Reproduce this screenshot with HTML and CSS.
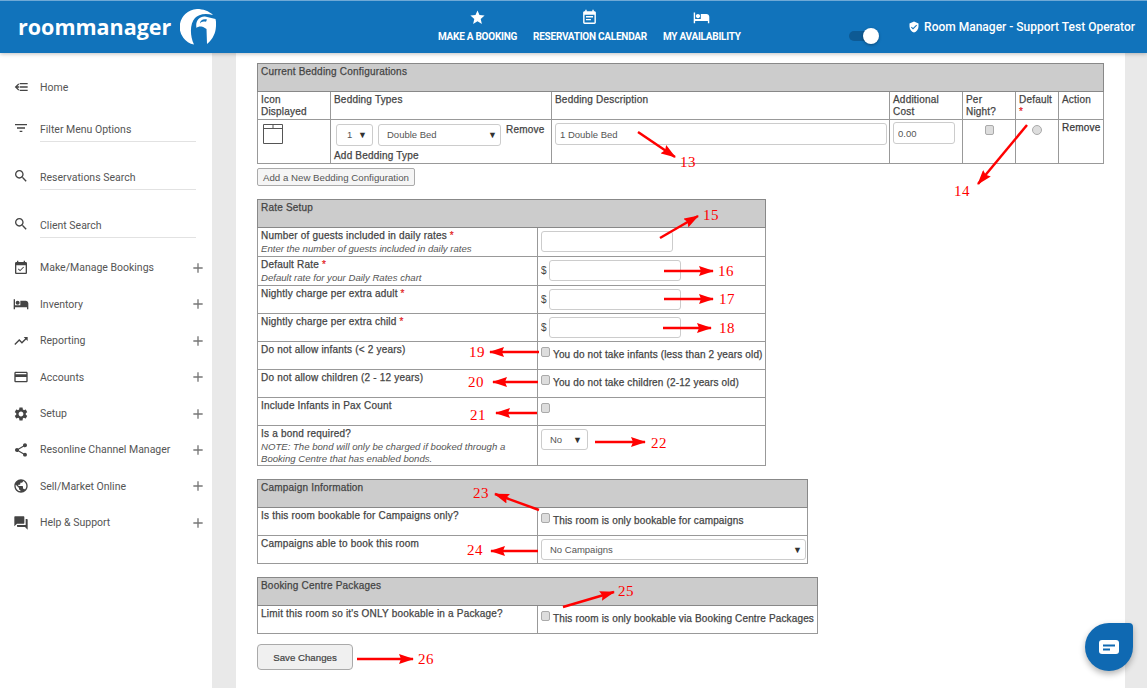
FILE: index.html
```html
<!DOCTYPE html>
<html lang="en">
<head>
<meta charset="utf-8">
<title>Room Manager</title>
<link rel="stylesheet" href="styles.css">
</head>
<body>
<svg class="defs" width="0" height="0" aria-hidden="true">
  <symbol id="i-star" viewBox="0 0 24 24"><path d="M12 17.27L18.18 21l-1.64-7.03L22 9.24l-7.19-.61L12 2 9.19 8.63 2 9.24l5.46 4.73L5.82 21z"/></symbol>
  <symbol id="i-note" viewBox="0 0 24 24"><path d="M17 10H7v2h10v-2zm2-7h-1V1h-2v2H8V1H6v2H5c-1.11 0-1.99.9-1.99 2L3 19c0 1.1.89 2 2 2h14c1.1 0 2-.9 2-2V5c0-1.1-.9-2-2-2zm0 16H5V8h14v11zm-5-5H7v2h7v-2z"/></symbol>
  <symbol id="i-hotel" viewBox="0 0 24 24"><path d="M7 13c1.66 0 3-1.34 3-3S8.66 7 7 7s-3 1.34-3 3 1.34 3 3 3zm12-6h-8v7H3V5H1v15h2v-3h18v3h2v-9c0-2.21-1.79-4-4-4z"/></symbol>
  <symbol id="i-shield" viewBox="0 0 24 24"><path d="M12 1L3 5v6c0 5.55 3.84 10.74 9 12 5.16-1.26 9-6.45 9-12V5l-9-4zm-2 16l-4-4 1.41-1.41L10 14.17l6.59-6.59L18 9l-8 8z"/></symbol>
  <symbol id="i-menu" viewBox="0 0 24 24"><path d="M10 6h12v2H10zM10 11h12v2H10zM10 16h12v2H10zM8 6.600L2.600 12 8 17.400l1.400-1.400-2.900-3H9v-2H6.500l2.900-3z"/></symbol>
  <symbol id="i-filter" viewBox="0 0 24 24"><path d="M10 18h4v-2h-4v2zM3 6v2h18V6H3zm3 7h12v-2H6v2z"/></symbol>
  <symbol id="i-search" viewBox="0 0 24 24"><path d="M15.5 14h-.79l-.28-.27C15.41 12.59 16 11.11 16 9.5 16 5.91 13.09 3 9.5 3S3 5.91 3 9.5 5.91 16 9.5 16c1.61 0 3.09-.59 4.23-1.57l.27.28v.79l5 4.99L20.49 19l-4.99-5zm-6 0C7.01 14 5 11.99 5 9.5S7.01 5 9.5 5 14 7.01 14 9.5 11.99 14 9.5 14z"/></symbol>
  <symbol id="i-event" viewBox="0 0 24 24"><path d="M16.53 11.06L15.47 10l-4.88 4.88-2.12-2.12-1.06 1.06L10.59 17l5.94-5.94zM19 3h-1V1h-2v2H8V1H6v2H5c-1.11 0-1.99.9-1.99 2L3 19c0 1.1.89 2 2 2h14c1.1 0 2-.9 2-2V5c0-1.1-.9-2-2-2zm0 16H5V8h14v11z"/></symbol>
  <symbol id="i-trend" viewBox="0 0 24 24"><path d="M16 6l2.29 2.29-4.88 4.88-4-4L2 16.59 3.41 18l6-6 4 4 6.3-6.29L22 12V6z"/></symbol>
  <symbol id="i-card" viewBox="0 0 24 24"><path d="M20 4H4c-1.11 0-1.99.89-1.99 2L2 18c0 1.11.89 2 2 2h16c1.11 0 2-.89 2-2V6c0-1.11-.89-2-2-2zm0 14H4v-6h16v6zm0-10H4V6h16v2z"/></symbol>
  <symbol id="i-gear" viewBox="0 0 24 24"><path d="M19.14,12.94c0.04-0.3,0.06-0.61,0.06-0.94c0-0.32-0.02-0.64-0.07-0.94l2.03-1.58c0.18-0.14,0.23-0.41,0.12-0.61l-1.92-3.32c-0.12-0.22-0.37-0.29-0.59-0.22l-2.39,0.96c-0.5-0.38-1.03-0.7-1.62-0.94L14.4,2.81c-0.04-0.24-0.24-0.41-0.48-0.41h-3.84c-0.24,0-0.43,0.17-0.47,0.41L9.25,5.35C8.66,5.59,8.12,5.92,7.63,6.29L5.24,5.33c-0.22-0.08-0.47,0-0.59,0.22L2.74,8.87C2.62,9.08,2.66,9.34,2.86,9.48l2.03,1.58C4.84,11.36,4.8,11.69,4.8,12s0.02,0.64,0.07,0.94l-2.03,1.58c-0.18,0.14-0.23,0.41-0.12,0.61l1.92,3.32c0.12,0.22,0.37,0.29,0.59,0.22l2.39-0.96c0.5,0.38,1.03,0.7,1.62,0.94l0.36,2.54c0.05,0.24,0.24,0.41,0.48,0.41h3.84c0.24,0,0.44-0.17,0.47-0.41l0.36-2.54c0.59-0.24,1.13-0.56,1.62-0.94l2.39,0.96c0.22,0.08,0.47,0,0.59-0.22l1.92-3.32c0.12-0.22,0.07-0.47-0.12-0.61L19.14,12.94z M12,15.6c-1.98,0-3.6-1.62-3.6-3.6s1.62-3.6,3.6-3.6s3.6,1.62,3.6,3.6S13.98,15.6,12,15.6z"/></symbol>
  <symbol id="i-share" viewBox="0 0 24 24"><path d="M18 16.08c-.76 0-1.44.3-1.96.77L8.91 12.7c.05-.23.09-.46.09-.7s-.04-.47-.09-.7l7.05-4.11c.54.5 1.25.81 2.04.81 1.66 0 3-1.34 3-3s-1.34-3-3-3-3 1.34-3 3c0 .24.04.47.09.7L8.04 9.81C7.5 9.31 6.79 9 6 9c-1.66 0-3 1.34-3 3s1.34 3 3 3c.79 0 1.5-.31 2.04-.81l7.12 4.16c-.05.21-.08.43-.08.65 0 1.61 1.31 2.92 2.92 2.92 1.61 0 2.92-1.31 2.92-2.92s-1.31-2.92-2.92-2.92z"/></symbol>
  <symbol id="i-globe" viewBox="0 0 24 24"><path d="M12 2C6.48 2 2 6.48 2 12s4.48 10 10 10 10-4.48 10-10S17.52 2 12 2zm-1 17.93c-3.95-.49-7-3.85-7-7.93 0-.62.08-1.21.21-1.79L9 15v1c0 1.1.9 2 2 2v1.93zm6.9-2.54c-.26-.81-1-1.39-1.9-1.39h-1v-3c0-.55-.45-1-1-1H8v-2h2c.55 0 1-.45 1-1V7h2c1.1 0 2-.9 2-2v-.41c2.93 1.19 5 4.06 5 7.41 0 2.08-.8 3.97-2.1 5.39z"/></symbol>
  <symbol id="i-forum" viewBox="0 0 24 24"><path d="M21 6h-2v9H6v2c0 .55.45 1 1 1h11l4 4V7c0-.55-.45-1-1-1zm-4 6V3c0-.55-.45-1-1-1H3c-.55 0-1 .45-1 1v14l4-4h10c.55 0 1-.45 1-1z"/></symbol>
  <symbol id="i-plus" viewBox="0 0 24 24"><path d="M19 13h-6v6h-2v-6H5v-2h6V5h2v6h6v2z"/></symbol>
</svg>

<header class="topbar">
  <div class="brand">
    <span class="brand-name">roommanager</span>
    <svg class="brand-mark" viewBox="0 0 36 36" width="36" height="36" aria-hidden="true">
      <path class="w" d="M17 0A18 18 0 0 0 14 35.6C9.5 26 10 14 15 9C18 6 24 3.500 33 6C29 2 23 0 17 0Z"/>
      <path class="w" d="M16.500 19C15 12 19.500 7 25 7.500L35.500 10C36.300 13 36.200 16 35.700 20C35 26 31 32 27 35L26.500 20L24 18.500C22 17 18 17 16.500 19Z"/>
      <path class="b" d="M27 10.500C23 9.500 20 11.500 20 14.500C21 12.500 23.500 12 26 12.800Z"/>
    </svg>
  </div>
  <nav class="topnav">
    <a class="topnav-item"><svg class="topnav-icon"><use href="#i-star"/></svg><span>MAKE A BOOKING</span></a>
    <a class="topnav-item"><svg class="topnav-icon"><use href="#i-note"/></svg><span>RESERVATION CALENDAR</span></a>
    <a class="topnav-item"><svg class="topnav-icon"><use href="#i-hotel"/></svg><span>MY AVAILABILITY</span></a>
  </nav>
  <div class="toggle"><span class="toggle-knob"></span></div>
  <div class="user"><svg class="user-icon"><use href="#i-shield"/></svg><span>Room Manager - Support Test Operator</span></div>
</header>

<div class="shell">
  <aside class="sidebar">
    <a class="side-item first"><svg class="side-icon"><use href="#i-menu"/></svg><span>Home</span></a>
    <a class="side-field"><svg class="side-icon"><use href="#i-filter"/></svg><span class="field-label">Filter Menu Options</span></a>
    <a class="side-field tall"><svg class="side-icon"><use href="#i-search"/></svg><span class="field-label">Reservations Search</span></a>
    <a class="side-field tall"><svg class="side-icon"><use href="#i-search"/></svg><span class="field-label">Client Search</span></a>
    <div class="side-group">
      <a class="side-item"><svg class="side-icon"><use href="#i-event"/></svg><span>Make/Manage Bookings</span><svg class="side-plus"><use href="#i-plus"/></svg></a>
      <a class="side-item"><svg class="side-icon"><use href="#i-hotel"/></svg><span>Inventory</span><svg class="side-plus"><use href="#i-plus"/></svg></a>
      <a class="side-item"><svg class="side-icon"><use href="#i-trend"/></svg><span>Reporting</span><svg class="side-plus"><use href="#i-plus"/></svg></a>
      <a class="side-item"><svg class="side-icon"><use href="#i-card"/></svg><span>Accounts</span><svg class="side-plus"><use href="#i-plus"/></svg></a>
      <a class="side-item"><svg class="side-icon"><use href="#i-gear"/></svg><span>Setup</span><svg class="side-plus"><use href="#i-plus"/></svg></a>
      <a class="side-item"><svg class="side-icon"><use href="#i-share"/></svg><span>Resonline Channel Manager</span><svg class="side-plus"><use href="#i-plus"/></svg></a>
      <a class="side-item"><svg class="side-icon"><use href="#i-globe"/></svg><span>Sell/Market Online</span><svg class="side-plus"><use href="#i-plus"/></svg></a>
      <a class="side-item"><svg class="side-icon"><use href="#i-forum"/></svg><span>Help &amp; Support</span><svg class="side-plus"><use href="#i-plus"/></svg></a>
    </div>
  </aside>

  <main class="content">
    <table class="grid grid-bedding">
      <colgroup><col class="c73"><col class="c221"><col class="c338"><col class="c73"><col class="c53"><col class="c43"><col class="c45"></colgroup>
      <tr class="r28"><th colspan="7">Current Bedding Configurations</th></tr>
      <tr class="r28">
        <td>Icon<br>Displayed</td><td>Bedding Types</td><td>Bedding Description</td><td>Additional<br>Cost</td><td>Per<br>Night?</td><td>Default<br><span class="req">*</span></td><td>Action</td>
      </tr>
      <tr class="r44">
        <td><svg class="bed" viewBox="0 0 20 20" width="20" height="20" aria-hidden="true"><path d="M.5.5h19v19H.5zM.5 4.500h19M10 .5v4"/></svg></td>
        <td class="pick-cell">
          <div class="pick-row">
            <div class="select s-count"><span>1</span><i>▼</i></div>
            <div class="select s-bed"><span>Double Bed</span><i>▼</i></div>
            <b class="remove">Remove</b>
          </div>
          <div class="add-type">Add Bedding Type</div>
        </td>
        <td class="desc-cell"><input class="input i-desc" type="text" value="1 Double Bed"></td>
        <td class="cost-cell"><input class="input i-cost" type="text" value="0.00"></td>
        <td class="center"><input class="check" type="checkbox"></td>
        <td class="center"><input class="radio" type="radio"></td>
        <td class="action">Remove</td>
      </tr>
    </table>
    <button class="btn-add" type="button">Add a New Bedding Configuration</button>

    <table class="grid grid-rate">
      <colgroup><col class="c280"><col></colgroup>
      <tr class="r28"><th colspan="2">Rate Setup</th></tr>
      <tr class="r29"><td><b>Number of guests included in daily rates <span class="req">*</span></b><em>Enter the number of guests included in daily rates</em></td><td class="field"><input class="input i-rate" type="text"></td></tr>
      <tr class="r29"><td><b>Default Rate <span class="req">*</span></b><em>Default rate for your Daily Rates chart</em></td><td class="field"><span class="dollar">$</span><input class="input i-rate" type="text"></td></tr>
      <tr class="r28"><td><b>Nightly charge per extra adult <span class="req">*</span></b></td><td class="field"><span class="dollar">$</span><input class="input i-rate" type="text"></td></tr>
      <tr class="r28"><td><b>Nightly charge per extra child <span class="req">*</span></b></td><td class="field"><span class="dollar">$</span><input class="input i-rate" type="text"></td></tr>
      <tr class="r28"><td><b>Do not allow infants (&lt; 2 years)</b></td><td class="tick"><input class="check" type="checkbox"><b>You do not take infants (less than 2 years old)</b></td></tr>
      <tr class="r28"><td><b>Do not allow children (2 - 12 years)</b></td><td class="tick"><input class="check" type="checkbox"><b>You do not take children (2-12 years old)</b></td></tr>
      <tr class="r28"><td><b>Include Infants in Pax Count</b></td><td class="tick"><input class="check" type="checkbox"></td></tr>
      <tr class="r40"><td><b>Is a bond required?</b><em>NOTE: The bond will only be charged if booked through a Booking Centre that has enabled bonds.</em></td><td class="field"><div class="select s-no"><span>No</span><i>▼</i></div></td></tr>
    </table>

    <table class="grid grid-campaign">
      <colgroup><col class="c280"><col></colgroup>
      <tr class="r28"><th colspan="2">Campaign Information</th></tr>
      <tr class="r28"><td><b>Is this room bookable for Campaigns only?</b></td><td class="tick"><input class="check" type="checkbox"><b>This room is only bookable for campaigns</b></td></tr>
      <tr class="r28"><td><b>Campaigns able to book this room</b></td><td class="field"><div class="select s-camp"><span>No Campaigns</span><i>▼</i></div></td></tr>
    </table>

    <table class="grid grid-package">
      <colgroup><col class="c280"><col></colgroup>
      <tr class="r28"><th colspan="2">Booking Centre Packages</th></tr>
      <tr class="r28"><td><b>Limit this room so it's ONLY bookable in a Package?</b></td><td class="tick"><input class="check" type="checkbox"><b>This room is only bookable via Booking Centre Packages</b></td></tr>
    </table>

    <button class="btn-save" type="button">Save Changes</button>
  </main>
</div>

<div class="chat"><svg viewBox="0 0 20 14" width="20" height="14" aria-hidden="true"><path class="chat-w" d="M3 0h14a3 3 0 0 1 3 3v8a3 3 0 0 1-3 3H3a3 3 0 0 1-3-3V3a3 3 0 0 1 3-3z"/><path class="chat-b" d="M4 4.500h12v2H4zM4 8.500h7v2H4z"/></svg></div>

<svg class="notes" viewBox="0 0 1147 688" width="1147" height="688" aria-hidden="true">
  <defs><marker id="head" markerUnits="userSpaceOnUse" markerWidth="15" markerHeight="10" refX="14" refY="5" orient="auto"><path d="M0 0L15 5L0 10L2 5z" fill="#f00"/></marker></defs>
  <g class="arrows">
    <line x1="638" y1="132" x2="675" y2="157"/>
    <line x1="1027" y1="125" x2="978" y2="184"/>
    <line x1="660" y1="238" x2="698" y2="216"/>
    <line x1="664" y1="271" x2="713" y2="271"/>
    <line x1="664" y1="299" x2="713" y2="299"/>
    <line x1="663" y1="328" x2="711" y2="328"/>
    <line x1="539" y1="352" x2="490" y2="352"/>
    <line x1="538" y1="382" x2="493" y2="382"/>
    <line x1="537" y1="413" x2="496" y2="413"/>
    <line x1="595" y1="442" x2="645" y2="442"/>
    <line x1="539" y1="510" x2="495" y2="494"/>
    <line x1="538" y1="551" x2="491" y2="551"/>
    <line x1="563" y1="607" x2="614" y2="592"/>
    <line x1="357" y1="659" x2="413" y2="659"/>
  </g>
  <g class="digits">
    <text x="680" y="167">13</text><text x="954" y="196">14</text><text x="703" y="220">15</text>
    <text x="718" y="276">16</text><text x="719" y="304">17</text><text x="719" y="333">18</text>
    <text x="469" y="357">19</text><text x="468" y="387">20</text><text x="470" y="420">21</text>
    <text x="651" y="448">22</text><text x="473" y="498">23</text><text x="467" y="555">24</text>
    <text x="618" y="596">25</text><text x="418" y="664">26</text>
  </g>
</svg>
</body>
</html>
```
FILE: styles.css
```css
* { box-sizing: border-box; }
html, body { margin: 0; height: 688px; overflow: hidden; }
body { background: #e9e9e9; font-family: "Liberation Sans", Arial, sans-serif; font-size: 10px; color: #444; position: relative; }
.defs { position: absolute; }

.topbar { height: 53px; background: #1173bb; border-top: 1px solid #6fa9d6; display: flex; align-items: flex-start; color: #fff; position: relative; z-index: 2; box-shadow: 0 1px 4px rgba(0,0,0,.25); }
.brand { width: 438px; padding: 8px 0 0 18px; display: flex; align-items: flex-start; gap: 8px; flex: none; }
.brand-name { font-family: "Open Sans", sans-serif; font-weight: 700; font-size: 21.500px; line-height: 36px; width: 154px; white-space: nowrap; }
.brand-mark { flex: none; }
.brand-mark .w { fill: #fff; }
.brand-mark .b { fill: #1173bb; }
.topnav { display: flex; gap: 16px; flex: none; }
.topnav-item { display: flex; flex-direction: column; align-items: center; font-family: Roboto, sans-serif; font-weight: 700; font-size: 10px; padding-top: 8px; line-height: 12px; letter-spacing: -.25px; white-space: nowrap; }
.topnav-icon { width: 17px; height: 17px; fill: #fff; margin-bottom: 5px; }
.toggle { margin: 30px 0 0 108px; width: 26px; height: 10px; background: #0d5a94; border-radius: 5px; position: relative; flex: none; }
.toggle-knob { position: absolute; left: 14px; top: -3.500px; width: 16px; height: 16px; border-radius: 50%; background: #fff; box-shadow: 0 1px 3px rgba(0,0,0,.35); }
.user { margin-left: auto; padding: 16px 12px 0 0; display: flex; align-items: center; gap: 4px; font-family: Roboto, sans-serif; font-weight: 500; font-size: 12px; line-height: 20px; white-space: nowrap; }
.user-icon { width: 12px; height: 12px; fill: #fff; }

.shell { display: flex; height: 635px; }
.sidebar { width: 212px; background: #fff; flex: none; padding-top: 16px; font-family: Roboto, sans-serif; font-size: 10.500px; color: #555; }
.side-item { display: flex; align-items: center; height: 36.400px; padding: 0 6px 0 13px; white-space: nowrap; }
.side-icon { width: 16px; height: 16px; fill: #444; flex: none; margin-right: 11px; }
.side-plus { width: 16px; height: 16px; fill: #777; margin-left: auto; }
.side-field { display: flex; align-items: flex-end; height: 37px; padding: 0 16px 0 13px; white-space: nowrap; }
.side-field .side-icon { margin-bottom: 6px; }
.side-field.tall { height: 48px; }
.field-label { flex: 1; border-bottom: 1px solid #e2e2e2; padding-bottom: 4px; line-height: 14px; }
.side-group { margin-top: 11.400px; }

.content { width: 889px; margin-left: 24px; background: #fff; padding: 10px 0 0 21px; flex: none; }
.grid { border-collapse: collapse; table-layout: fixed; }
.grid th, .grid td { border: 1px solid #999; padding: 2px 3px 0; vertical-align: top; text-align: left; line-height: 12px; font-size: 10px; font-weight: 400; color: #444; letter-spacing: .2px; -webkit-text-stroke: .25px #444; }
.grid th { background: #ccc; border-color: #888; }
.grid b { font-weight: 400; }
.grid em { display: block; margin-top: 1px; font-style: italic; font-size: 9.600px; letter-spacing: 0; -webkit-text-stroke: 0; color: #555; }
.r28 { height: 28px; } .r29 { height: 29px; } .r40 { height: 40px; } .r44 { height: 44px; }
.c73 { width: 73px; } .c221 { width: 221px; } .c338 { width: 338px; } .c53 { width: 53px; } .c43 { width: 43px; } .c45 { width: 45px; } .c280 { width: 280px; }
.grid-bedding { width: 846px; }
.grid-rate { width: 509px; margin-top: 13px; }
.grid-campaign { width: 551px; margin-top: 13px; }
.grid-package { width: 561px; margin-top: 13px; }
.req { color: #e21b1b; -webkit-text-stroke: .2px #e21b1b; }

.input { display: block; border: 1px solid #ccc; border-radius: 3px; background: #fff; font: 9.500px "Liberation Sans", Arial, sans-serif; -webkit-text-stroke: 0; color: #555; padding: 0 4px; height: 21px; outline: 0; }
.i-desc { width: 332px; height: 22px; }
.i-cost { width: 62px; height: 22px; }
.i-rate { width: 132px; height: 21px; }
.select { display: flex; align-items: center; justify-content: space-between; height: 22px; border: 1px solid #ccc; border-radius: 3px; background: #fff; padding: 0 3px 0 8px; font-size: 9.500px; letter-spacing: 0; -webkit-text-stroke: 0; color: #555; }
.select i { font-style: normal; font-size: 9px; color: #333; }
.s-count { width: 37px; padding: 0 5px 0 10px; }
.s-bed { width: 123px; }
.s-no { width: 47px; height: 21px; padding-right: 5px; }
.s-camp { width: 265px; height: 21px; }

.grid .pick-cell { padding: 4px 0 0 5px; }
.pick-row { display: flex; align-items: flex-start; gap: 5px; }
.add-type { margin: 4px 0 0 -2px; }
.grid .desc-cell { padding: 3px 0 0 3px; }
.grid .cost-cell { padding: 2px 0 0 3px; }
.grid .center { text-align: center; padding-top: 5px; }
.grid .action { color: #333; }
.bed { display: block; margin: 2px 0 0 2px; fill: none; stroke: #555; stroke-width: 1; }
.grid .field { padding: 3px 0 0 3px; }
.field .i-rate { display: inline-block; vertical-align: top; }
.dollar { display: inline-block; width: 8px; line-height: 21px; -webkit-text-stroke: 0; letter-spacing: 0; }
.grid .tick { padding: 5px 0 0 3px; white-space: nowrap; letter-spacing: .15px; }
.tick b { display: inline-block; vertical-align: top; margin: 2px 0 0 3px; line-height: 12px; }

.check, .radio { appearance: none; -webkit-appearance: none; margin: 0; width: 9px; height: 10px; background: #ddd; border: 1px solid #aaa; border-radius: 2px; display: inline-block; vertical-align: top; }
.radio { width: 10px; height: 10px; border-radius: 50%; }

.btn-add { display: block; margin-top: 4px; width: 158px; height: 18px; padding: 0; background: #f5f5f5; border: 1px solid #aaa; border-radius: 2px; font: 9.700px "Liberation Sans", Arial, sans-serif; color: #555; cursor: default; }
.btn-save { display: block; margin-top: 10px; width: 96px; height: 26px; padding: 0; background: #f0f0f0; border: 1px solid #aaa; border-radius: 4px; font: 9.700px "Liberation Sans", Arial, sans-serif; -webkit-text-stroke: .2px #444; color: #444; cursor: default; }

.chat { position: absolute; left: 1085px; top: 623px; width: 48px; height: 48px; background: #0f69b2; border-radius: 24px 4px 24px 24px; display: flex; align-items: center; justify-content: center; box-shadow: 0 3px 6px rgba(0,0,0,.3); z-index: 3; }
.chat-w { fill: #fff; }
.chat-b { fill: #0f69b2; }

.notes { position: absolute; left: 0; top: 0; pointer-events: none; z-index: 4; }
.arrows line { stroke: #f00; stroke-width: 2.500; marker-end: url(#head); }
.digits text { fill: #f00; font-family: "Liberation Serif", serif; font-size: 15px; letter-spacing: .5px; }
```
